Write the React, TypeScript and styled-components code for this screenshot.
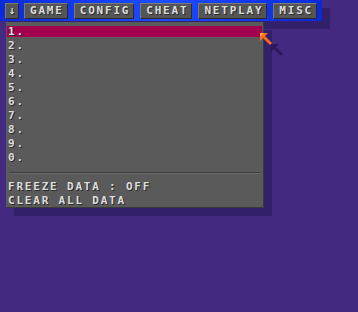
import React from "react"
import styled, { createGlobalStyle } from "styled-components"

const GlobalStyle = createGlobalStyle`
  html, body {
    margin: 0;
    padding: 0;
    background: #432a80;
  }
`

const menus = ["GAME", "CONFIG", "CHEAT", "NETPLAY", "MISC"]
const slots = ["1.", "2.", "3.", "4.", "5.", "6.", "7.", "8.", "9.", "0."]

export default function App() {
  return (
    <>
      <GlobalStyle />
      <Screen>
        <MenuBar>
          <ArrowButton>↓</ArrowButton>
          {menus.map((m) => (
            <MenuButton key={m}>{m}</MenuButton>
          ))}
        </MenuBar>
        <Panel>
          <RowList>
            {slots.map((s, i) => (
              <Row key={s} $active={i === 0}>
                {s}
              </Row>
            ))}
          </RowList>
          <Divider />
          <RowList>
            <Row>FREEZE DATA : OFF</Row>
            <Row>CLEAR ALL DATA</Row>
          </RowList>
        </Panel>
        <Cursor width="34" height="34" viewBox="0 0 34 34">
          <path d="M12 12 L12 20 L15 17 L22 24 L24 22 L17 15 L20 12 Z" fill="#2a1a5c" />
          <path d="M1 1 L1 9 L4 6 L11 13 L13 11 L6 4 L9 1 Z" fill="#ff6a1a" />
          <path d="M1 1 L1 5 L5 1 Z" fill="#ffb040" />
        </Cursor>
      </Screen>
    </>
  )
}

const Screen = styled.div`
  position: relative;
  width: 358px;
  height: 312px;
  overflow: hidden;
  background: #432a80;
  font-family: "DejaVu Sans Mono", "Liberation Mono", monospace;
  font-weight: bold;
  font-size: 11px;
  letter-spacing: 1.8px;
  color: #dcdcdc;
  text-shadow: 1px 1px 0 #2c2c2c;
`

const MenuBar = styled.div`
  display: flex;
  align-items: center;
  gap: 6px;
  width: 322px;
  height: 21px;
  box-sizing: border-box;
  padding: 0 0 0 5px;
  background: linear-gradient(90deg, #0a2ad8 0%, #1e4cff 50%, #0a2ad8 100%);
  box-shadow: 8px 8px 0 #34206a;
  position: relative;
  z-index: 1;
`

const ButtonBase = styled.div`
  height: 16px;
  box-sizing: border-box;
  background: #555555;
  border-top: 1px solid #7a7a7a;
  border-left: 1px solid #7a7a7a;
  border-bottom: 1px solid #2a2a2a;
  border-right: 1px solid #2a2a2a;
  display: flex;
  align-items: center;
  justify-content: center;
  line-height: 1;
`

const ArrowButton = styled(ButtonBase)`
  width: 14px;
  letter-spacing: 0;
  margin-right: -1px;
`

const MenuButton = styled(ButtonBase)`
  padding: 0 3px 0 5px;
`

const Panel = styled.div`
  position: relative;
  z-index: 2;
  margin: 1px 0 0 6px;
  width: 258px;
  height: 186px;
  box-sizing: border-box;
  background: #5a5a5a;
  border-right: 1px solid #3a3a3a;
  border-bottom: 1px solid #3a3a3a;
  box-shadow: 8px 8px 0 #33206b;
  padding: 4px 1px 0 1px;
  display: flex;
  flex-direction: column;
`

const RowList = styled.div`
  display: flex;
  flex-direction: column;
  gap: 3px;
`

const Row = styled.div<{ $active?: boolean }>`
  height: 11px;
  line-height: 12px;
  padding-left: 1px;
  white-space: nowrap;
  background: ${(p) => (p.$active ? "#a3004f" : "transparent")};
`

const Divider = styled.div`
  margin: 9px 2px 7px 2px;
  height: 1px;
  background: #3c3c3c;
  border-bottom: 1px solid #6a6a6a;
`

const Cursor = styled.svg`
  position: absolute;
  left: 259px;
  top: 32px;
  z-index: 3;
`
